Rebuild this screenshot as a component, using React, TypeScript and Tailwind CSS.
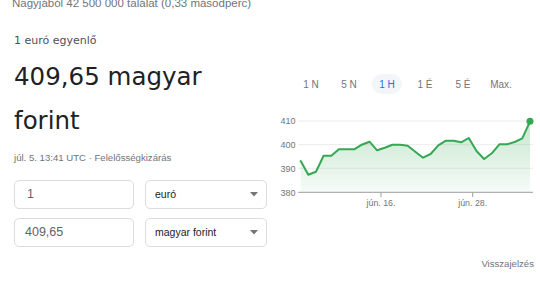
import React from "react";

const ys = [161, 174.7, 171.7, 155.7, 155.7, 149.3, 149.3, 149.3, 144.7, 141.7, 150.3, 147.7, 144.7, 144.7, 145.7, 151.7, 157.7, 154, 145.3, 140.7, 140.7, 142.3, 138, 151, 159, 153.3, 144.3, 144.3, 142, 138.3, 121.3];
const pts = ys.map((y, i) => [300.7 + i * 7.643, y] as const);
const linePath = pts.map((p, i) => `${i === 0 ? "M" : "L"}${p[0].toFixed(1)},${p[1]}`).join(" ");
const areaPath = `${linePath} L${pts[pts.length - 1][0].toFixed(1)},192.3 L${pts[0][0]},192.3 Z`;

const tabs = ["1 N", "5 N", "1 H", "1 É", "5 É", "Max."];

function Arrow() {
  return (
    <svg width="8" height="5" viewBox="0 0 8 5" className="block">
      <path d="M0 0 L8 0 L4 4.5 Z" fill="#757575" />
    </svg>
  );
}

export default function App() {
  const arial = { fontFamily: '"Liberation Sans", Arial, sans-serif' };
  const deja = { fontFamily: '"DejaVu Sans", sans-serif' };
  return (
    <div className="flex flex-col w-[540px] h-[304px] overflow-hidden bg-white" style={arial}>
      <div className="-mt-[4px] pl-[12px] text-[11.5px] leading-[14px] text-[#70757a] whitespace-nowrap">
        Nagyjából 42 500 000 találat (0,33 másodperc)
      </div>
      <div className="flex">
        <div className="w-[270px] pl-[14px] flex flex-col">
          <div className="mt-[24px] text-[11px] leading-[14px] text-[#4d5156]" style={deja}>
            1 euró egyenlő
          </div>
          <div className="mt-[7px] text-[24.5px] leading-[44px] text-[#202124]" style={deja}>
            409,65 magyar
            <br />
            forint
          </div>
          <div className="mt-[9px] text-[9.6px] leading-[12px] text-[#70757a] whitespace-nowrap">
            júl. 5. 13:41 UTC · Felelősségkizárás
          </div>
          <div className="mt-[16px] grid grid-cols-[120px_122px] gap-x-[11px] gap-y-[9px]">
            <div className="h-[29px] border border-[#dadce0] rounded-[5px] pl-[12px] flex items-center text-[12.5px] text-[#5f6368]">
              1
            </div>
            <div className="h-[29px] border border-[#dadce0] rounded-[5px] pl-[9px] pr-[8px] flex items-center justify-between text-[10.5px] text-[#202124]">
              <span>euró</span>
              <Arrow />
            </div>
            <div className="h-[29px] border border-[#dadce0] rounded-[5px] pl-[10px] flex items-center text-[12.5px] text-[#5f6368]">
              409,65
            </div>
            <div className="h-[29px] border border-[#dadce0] rounded-[5px] pl-[9px] pr-[8px] flex items-center justify-between text-[10.5px] text-[#202124]">
              <span>magyar forint</span>
              <Arrow />
            </div>
          </div>
        </div>
        <div className="flex-1 flex flex-col">
          <div className="mt-[64px] pl-[22px] flex">
            {tabs.map((t) => (
              <div key={t} className="w-[38px] flex justify-center">
                <span
                  className={
                    t === "1 H"
                      ? "h-[20px] px-[7px] rounded-full bg-[#f3f5f8] flex items-center text-[10px] text-[#1a73e8] whitespace-nowrap"
                      : "h-[20px] px-[7px] flex items-center text-[10px] text-[#70757a] whitespace-nowrap"
                  }
                >
                  {t}
                </span>
              </div>
            ))}
          </div>
          <svg width="265" height="104" viewBox="270 110 265 104" className="block mt-[16px]">
            <defs>
              <linearGradient id="g" x1="0" y1="0" x2="0" y2="1">
                <stop offset="0%" stopColor="#34a853" stopOpacity="0.28" />
                <stop offset="100%" stopColor="#34a853" stopOpacity="0.04" />
              </linearGradient>
            </defs>
            {[121, 144.7, 168.3].map((y) => (
              <line key={y} x1="298" x2="533" y1={y} y2={y} stroke="#ececec" strokeWidth="1" />
            ))}
            <path d={areaPath} fill="url(#g)" />
            <line x1="298" x2="533" y1="192.3" y2="192.3" stroke="#9e9e9e" strokeWidth="1" />
            <line x1="381" x2="381" y1="192.3" y2="197" stroke="#9e9e9e" strokeWidth="1" />
            <line x1="472.7" x2="472.7" y1="192.3" y2="197" stroke="#9e9e9e" strokeWidth="1" />
            {[
              ["410", 121],
              ["400", 144.7],
              ["390", 168.3],
              ["380", 192.3],
            ].map(([l, y]) => (
              <text key={l as string} x="295.5" y={(y as number) + 3.2} textAnchor="end" fontSize="9" fill="#70757a" fontFamily='"Liberation Sans", Arial, sans-serif'>
                {l}
              </text>
            ))}
            <text x="381" y="206" textAnchor="middle" fontSize="8.8" fill="#70757a" fontFamily='"Liberation Sans", Arial, sans-serif'>
              jún. 16.
            </text>
            <text x="472.7" y="206" textAnchor="middle" fontSize="8.8" fill="#70757a" fontFamily='"Liberation Sans", Arial, sans-serif'>
              jún. 28.
            </text>
            <path d={linePath} fill="none" stroke="#34a853" strokeWidth="2" strokeLinejoin="round" strokeLinecap="round" />
            <circle cx={pts[pts.length - 1][0]} cy={pts[pts.length - 1][1]} r="3.5" fill="#34a853" />
          </svg>
        </div>
      </div>
      <div className="mt-[11px] pr-[6px] flex justify-end text-[9.6px] leading-[12px] text-[#70757a]">
        Visszajelzés
      </div>
    </div>
  );
}
